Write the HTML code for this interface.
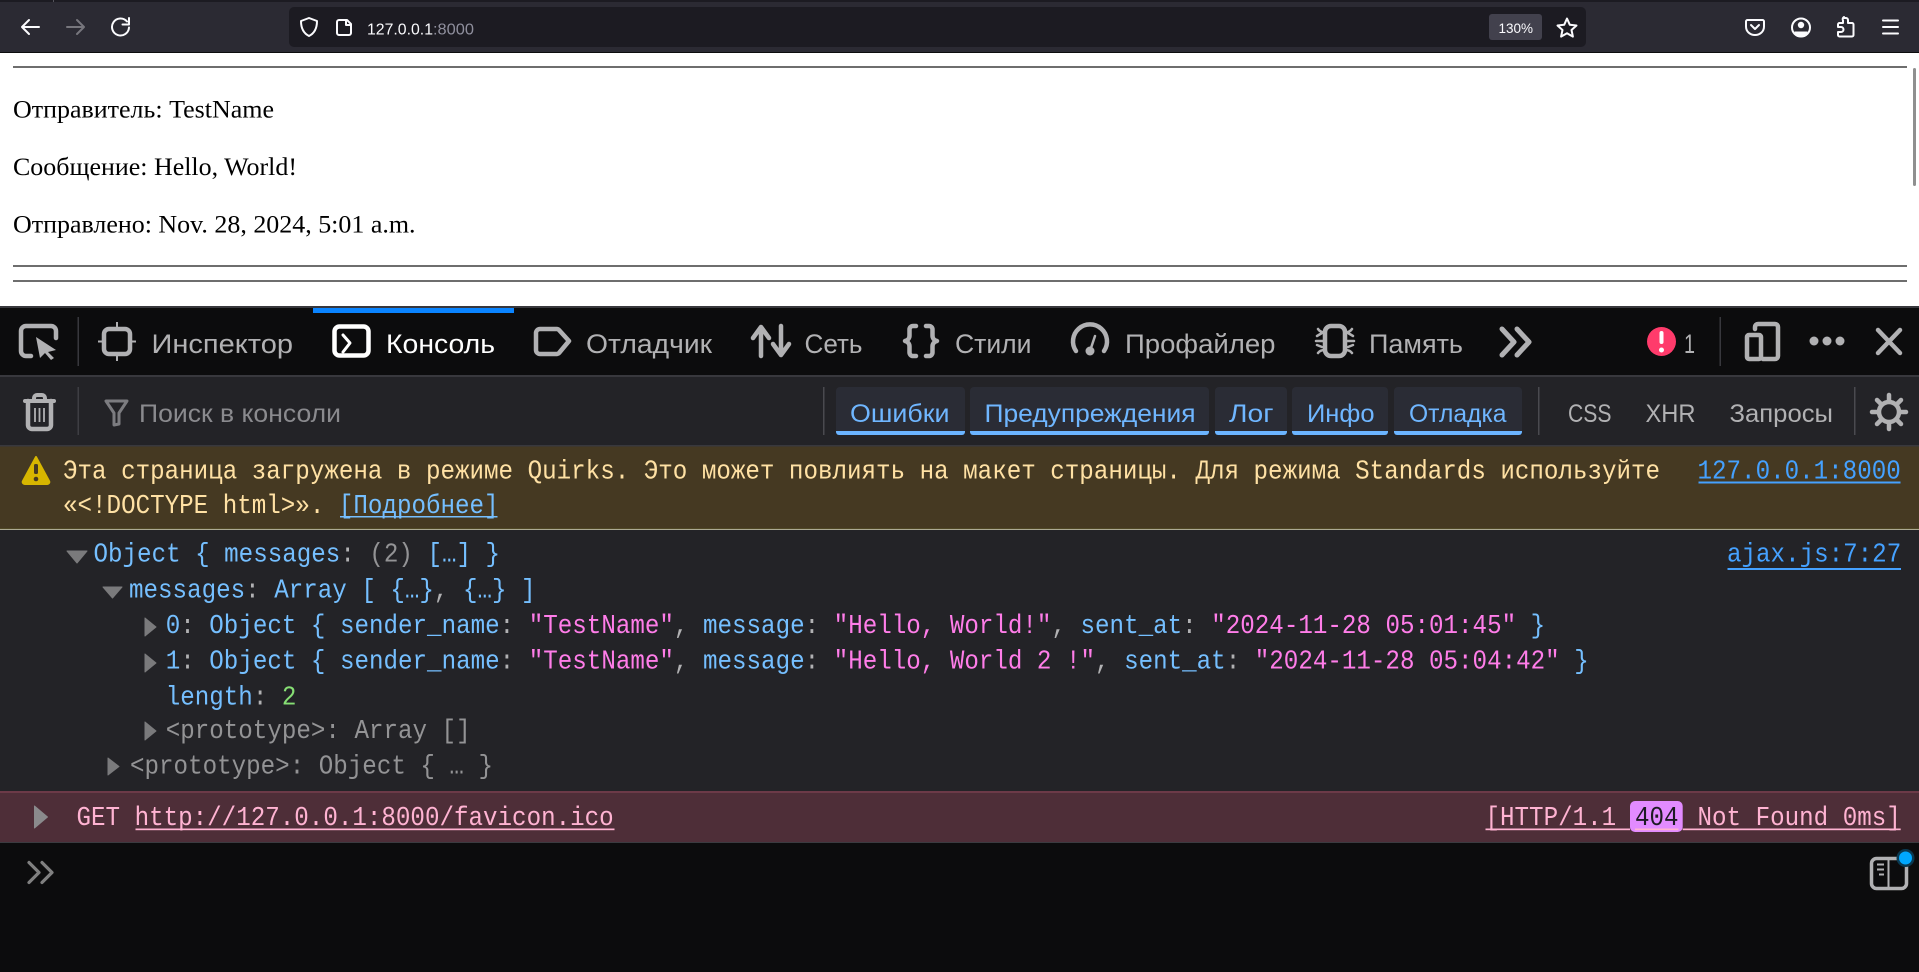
<!DOCTYPE html>
<html><head><meta charset="utf-8"><title>127.0.0.1:8000</title>
<style>
html,body{margin:0;padding:0;background:#fff;overflow:hidden;width:1919px;height:972px}
svg{display:block;position:absolute;left:0;top:0}
text{white-space:pre}
.s{font-family:"Liberation Sans",sans-serif}
.t{font-family:"Liberation Sans",sans-serif;font-size:27px;fill:#b1b1b3}
.f{font-family:"Liberation Sans",sans-serif;font-size:25px;fill:#6fb6ff}
.g{font-family:"Liberation Sans",sans-serif;font-size:25px;fill:#b1b1b3}
.p{font-family:"Liberation Serif",serif;font-size:25px;fill:#000}
.m{font-family:"Liberation Mono",monospace;font-size:26.4px;fill:#75bfff}
.d{fill:#b1b1b3}.n{fill:#939395}.r{fill:#ff7de9}.e{fill:#86de74}
.i{fill:none;stroke:#b1b1b3;stroke-width:4.5;stroke-linecap:round;stroke-linejoin:round}
.w{fill:none;stroke:#fbfbfe;stroke-width:2;stroke-linecap:round;stroke-linejoin:round}
</style></head><body>
<svg width="1919" height="972" viewBox="0 0 1919 972" xmlns="http://www.w3.org/2000/svg">
<!-- browser toolbar -->
<rect width="1919" height="53" fill="#2b2a33"/>
<rect width="1919" height="2" fill="#1c1b22"/>
<rect x="53" width="1" height="2" fill="#55545c"/>
<rect y="52" width="1919" height="1" fill="#0c0c0d"/>
<path class="w" d="M39 27H22M29 20l-7 7 7 7"/>
<path class="w" style="stroke:#77767d" d="M67 27h17M77 20l7 7-7 7"/>
<path class="w" d="M127 21.500a8.500 8.500 0 1 0 2 6M129 18v6.500h-6.500"/>
<rect x="289" y="7" width="1297" height="40" rx="5" fill="#1c1b22"/>
<path class="w" d="M309 18l8 3c0 7-2 12-8 15-6-3-8-8-8-15z"/>
<path class="w" d="M339 20h8l4 4v9a2 2 0 0 1-2 2h-10a2 2 0 0 1-2-2V22a2 2 0 0 1 2-2zM346 20v5h5"/>
<text class="s" x="367" y="34.500" font-size="16" fill="#fbfbfe" textLength="66" lengthAdjust="spacingAndGlyphs">127.0.0.1</text>
<text class="s" x="433" y="34.500" font-size="16" fill="#8f8f9d" textLength="41" lengthAdjust="spacingAndGlyphs">:8000</text>
<rect x="1489" y="14" width="53" height="26" rx="3" fill="#42414d"/>
<text class="s" x="1498.500" y="33" font-size="14" fill="#fbfbfe" textLength="34.500" lengthAdjust="spacingAndGlyphs">130%</text>
<path class="w" d="M1567 18.500l2.800 6.300 6.700.7-5 4.500 1.400 6.600-5.900-3.400-5.900 3.400 1.400-6.600-5-4.500 6.700-.7z"/>
<path class="w" d="M1747.500 20h15a1.500 1.500 0 0 1 1.500 1.500v5c0 5-4 8.500-9 8.500s-9-3.500-9-8.500v-5a1.500 1.500 0 0 1 1.500-1.500z"/>
<path class="w" d="M1751 25l4 4 4-4"/>
<circle class="w" cx="1801" cy="27.500" r="9"/>
<circle cx="1801" cy="25" r="3.200" fill="#fbfbfe"/><path d="M1794.500 31.500h13a6.500 4.500 0 0 1-13 0z" fill="#fbfbfe"/>
<path class="w" d="M1843 18h3a2 2 0 0 1 2 2v3h4a1.500 1.500 0 0 1 1.500 1.500V35a1.500 1.500 0 0 1-1.500 1.500h-12.500a1.500 1.500 0 0 1-1.500-1.500v-3h3a2.500 2.500 0 0 0 0-5h-3v-2.500a1.500 1.500 0 0 1 1.500-1.500h3.500v-2.500a2.500 2.500 0 0 1 1-3.500z"/>
<path class="w" d="M1883 20.500h15M1883 27h15M1883 33.500h15"/>

<!-- page -->
<rect y="53" width="1919" height="253" fill="#fff"/>
<rect x="13" y="66" width="1894" height="2" fill="#6e6e6e"/>
<text class="p" x="13" y="117.500" textLength="261" lengthAdjust="spacingAndGlyphs">Отправитель: TestName</text>
<text class="p" x="13" y="175" textLength="284" lengthAdjust="spacingAndGlyphs">Сообщение: Hello, World!</text>
<text class="p" x="13" y="232.500" textLength="402.500" lengthAdjust="spacingAndGlyphs">Отправлено: Nov. 28, 2024, 5:01 a.m.</text>
<rect x="13" y="265" width="1894" height="2" fill="#6e6e6e"/>
<rect x="13" y="280" width="1894" height="2" fill="#6e6e6e"/>
<rect x="1913" y="68" width="3" height="118" rx="1.500" fill="#8f8f8f"/>

<!-- devtools tab bar -->
<rect y="306" width="1919" height="2" fill="#38383d"/>
<rect y="308" width="1919" height="67" fill="#0c0c0d"/>
<rect x="313" y="308" width="201" height="5" fill="#0a84ff"/>
<rect y="375" width="1919" height="2" fill="#38383d"/>
<path class="i" d="M31 356h-5a5 5 0 0 1-5-5V331a5 5 0 0 1 5-5h25a5 5 0 0 1 5 5v7"/>
<path d="M36 337l20 13-8 2 6 6-3 2-6-7-5 5z" fill="#b1b1b3"/>
<rect x="77.500" y="317" width="1.500" height="49" fill="#38383d"/>
<rect class="i" x="104" y="329" width="26" height="25" rx="5"/>
<path d="M98 341.500h6M130 341.500h6M117 322v7M117 354v7" fill="none" stroke="#b1b1b3" stroke-width="2"/>
<text class="t" x="151.500" y="353" textLength="141.500" lengthAdjust="spacingAndGlyphs">Инспектор</text>
<rect x="334.500" y="326.500" width="34" height="29" rx="5" fill="none" stroke="#fff" stroke-width="4.500"/>
<path d="M343 335l7 8-7 9" fill="none" stroke="#fff" stroke-width="3" stroke-linecap="round" stroke-linejoin="round"/>
<text class="t" style="fill:#fff" x="386" y="353" textLength="109" lengthAdjust="spacingAndGlyphs">Консоль</text>
<path class="i" d="M540 329h17a3 3 0 0 1 2 1l10 11-10 12a3 3 0 0 1-2 1h-17a4 4 0 0 1-4-4v-17a4 4 0 0 1 4-4z"/>
<text class="t" x="586" y="353" textLength="126" lengthAdjust="spacingAndGlyphs">Отладчик</text>
<path class="i" d="M761 356V328M753 338l8-11 8 11M781 326v28M773 344l8 11 8-11"/>
<text class="t" x="804.500" y="353" textLength="58" lengthAdjust="spacingAndGlyphs">Сеть</text>
<path class="i" d="M916 326h-3a3.500 3.500 0 0 0-3.500 3.500v6a5.500 5.500 0 0 1-4.500 5.500 5.500 5.500 0 0 1 4.500 5.500v6a3.500 3.500 0 0 0 3.500 3.500h3M926 326h3a3.500 3.500 0 0 1 3.500 3.500v6a5.500 5.500 0 0 0 4.500 5.500 5.500 5.500 0 0 0-4.500 5.500v6a3.500 3.500 0 0 1-3.500 3.500h-3"/>
<text class="t" x="955" y="353" textLength="76.500" lengthAdjust="spacingAndGlyphs">Стили</text>
<path class="i" d="M1076 351a17 17 0 1 1 28 0"/>
<circle cx="1090" cy="351" r="4.500" fill="#b1b1b3"/><path class="i" style="stroke-width:2.500" d="M1090 351l5-15"/>
<text class="t" x="1125" y="353" textLength="150.500" lengthAdjust="spacingAndGlyphs">Профайлер</text>
<rect class="i" x="1325" y="326" width="20" height="30" rx="6"/>
<path class="i" style="stroke-width:2.500" d="M1325 333q-5-1-7-4M1322 333l-5 3M1325 341h-9M1325 350q-5 0-7 3M1322 347l-5-2M1345 333q5-1 7-4M1348 333l5 3M1345 341h9M1345 350q5 0 7 3M1348 347l5-2"/>
<text class="t" x="1369" y="353" textLength="94" lengthAdjust="spacingAndGlyphs">Память</text>
<path class="i" style="stroke-width:5" d="M1502 329l12 13-12 13M1517 329l12 13-12 13"/>
<circle cx="1661.500" cy="341.500" r="14.500" fill="#ff3b6b"/>
<rect x="1659.500" y="331" width="4" height="13" rx="2" fill="#fff"/><circle cx="1661.500" cy="350" r="2.500" fill="#fff"/>
<text class="t" x="1684" y="353" textLength="11" lengthAdjust="spacingAndGlyphs">1</text>
<rect x="1719.500" y="317" width="1.500" height="49" fill="#38383d"/>
<path class="i" d="M1755 329v-2a3 3 0 0 1 3-3h17a3 3 0 0 1 3 3v29a3 3 0 0 1-3 3h-12"/>
<rect class="i" x="1747" y="335" width="14" height="24" rx="2"/>
<circle cx="1814" cy="341" r="4.500" fill="#b1b1b3"/><circle cx="1827" cy="341" r="4.500" fill="#b1b1b3"/><circle cx="1840" cy="341" r="4.500" fill="#b1b1b3"/>
<path class="i" d="M1878 330l22 23M1900 330l-22 23"/>

<!-- filter bar -->
<rect y="377" width="1919" height="68" fill="#232327"/>
<path class="i" style="stroke-width:4" d="M25 401h29M34 400v-2a3 3 0 0 1 3-3h5a3 3 0 0 1 3 3v2"/>
<path class="i" d="M28 401v24a4 4 0 0 0 4 4h15a4 4 0 0 0 4-4v-24"/>
<path d="M35 408v14M39.500 408v14M44 408v14" fill="none" stroke="#b1b1b3" stroke-width="1.800"/>
<rect x="77.500" y="387" width="1.500" height="48" fill="#3e3e43"/>
<path d="M106 401h21l-8 12v11l-5 1v-12z" fill="none" stroke="#7c7c80" stroke-width="3" stroke-linejoin="round"/>
<text class="g" style="fill:#8a8a8e" x="139" y="422" textLength="202" lengthAdjust="spacingAndGlyphs">Поиск в консоли</text>
<rect x="823" y="387" width="1.500" height="48" fill="#4a4a4f"/>
<g fill="#2a2c35">
<rect x="836" y="387" width="129" height="48" rx="4"/><rect x="970" y="387" width="239" height="48" rx="4"/><rect x="1215" y="387" width="72" height="48" rx="4"/><rect x="1292" y="387" width="96" height="48" rx="4"/><rect x="1394" y="387" width="128" height="48" rx="4"/>
</g>
<g fill="#6bb4ff">
<path d="M836 431h129v1a3 3 0 0 1-3 3H839a3 3 0 0 1-3-3z"/><path d="M970 431h239v1a3 3 0 0 1-3 3H973a3 3 0 0 1-3-3z"/><path d="M1215 431h72v1a3 3 0 0 1-3 3h-66a3 3 0 0 1-3-3z"/><path d="M1292 431h96v1a3 3 0 0 1-3 3h-90a3 3 0 0 1-3-3z"/><path d="M1394 431h128v1a3 3 0 0 1-3 3h-122a3 3 0 0 1-3-3z"/>
</g>
<text class="f" x="850" y="422" textLength="99.500" lengthAdjust="spacingAndGlyphs">Ошибки</text>
<text class="f" x="984.500" y="422" textLength="211" lengthAdjust="spacingAndGlyphs">Предупреждения</text>
<text class="f" x="1229" y="422" textLength="44.500" lengthAdjust="spacingAndGlyphs">Лог</text>
<text class="f" x="1307" y="422" textLength="67.500" lengthAdjust="spacingAndGlyphs">Инфо</text>
<text class="f" x="1409" y="422" textLength="97.500" lengthAdjust="spacingAndGlyphs">Отладка</text>
<rect x="1538" y="387" width="1.500" height="48" fill="#4a4a4f"/>
<text class="g" x="1568" y="422" textLength="43.500" lengthAdjust="spacingAndGlyphs">CSS</text>
<text class="g" x="1645.500" y="422" textLength="50" lengthAdjust="spacingAndGlyphs">XHR</text>
<text class="g" x="1729.500" y="422" textLength="103.500" lengthAdjust="spacingAndGlyphs">Запросы</text>
<rect x="1854" y="387" width="1.500" height="48" fill="#4a4a4f"/>
<circle class="i" cx="1889" cy="412" r="10"/>
<path class="i" d="M1889 395v6M1889 423v6M1872 412h6M1900 412h6M1877 400l4 4M1897 420l4 4M1877 424l4-4M1897 404l4-4"/>

<!-- warning -->
<rect y="445" width="1919" height="84" fill="#453922"/>
<rect y="445" width="1919" height="1.500" fill="#38383d"/>
<rect y="528.500" width="1919" height="1" fill="#5a5629"/>
<path d="M36 457l13 24a2 2 0 0 1-2 3H25a2 2 0 0 1-2-3z" fill="#d7b600" stroke="#d7b600" stroke-width="2" stroke-linejoin="round"/>
<rect x="34" y="464" width="4" height="10" rx="1.500" fill="#453922"/><circle cx="36" cy="479" r="2.300" fill="#453922"/>
<text class="m" style="fill:#ffe1a4" transform="translate(63 478.700) scale(.917 1)">Эта страница загружена в режиме Quirks. Это может повлиять на макет страницы. Для режима Standards используйте</text>
<text class="m" style="fill:#ffe1a4" transform="translate(63 513) scale(.917 1)">«&lt;!DOCTYPE html&gt;». <tspan style="fill:#75bfff">[Подробнее]</tspan></text>
<rect x="340" y="516" width="157.500" height="1.500" fill="#75bfff"/>
<text class="m" style="fill:#45a1ff" transform="translate(1697.500 478.700) scale(.917 1)">127.0.0.1:8000</text>
<rect x="1698.500" y="481.500" width="202" height="2" fill="#45a1ff"/>

<!-- console output -->
<rect y="530" width="1919" height="261" fill="#232327"/>
<path d="M67 551h20l-10 12z" fill="#7a7a7c" stroke="#7a7a7c" stroke-linejoin="round"/>
<text class="m" transform="translate(93.500 561.500) scale(.917 1)">Object { messages<tspan class="d">:</tspan> <tspan class="n">(2)</tspan> […] }</text>
<text class="m" style="fill:#45a1ff" transform="translate(1727 561.500) scale(.917 1)">ajax.js:7:27</text>
<rect x="1727.500" y="568" width="173.500" height="2" fill="#45a1ff"/>
<path d="M103 587h19l-9.500 11z" fill="#7a7a7c" stroke="#7a7a7c" stroke-linejoin="round"/>
<text class="m" transform="translate(129 597.700) scale(.917 1)">messages<tspan class="d">:</tspan> Array [ {…}<tspan class="d">,</tspan> {…} ]</text>
<path d="M145 618v18l11-9z" fill="#7a7a7c" stroke="#7a7a7c" stroke-linejoin="round"/>
<text class="m" transform="translate(165.700 633) scale(.917 1)">0<tspan class="d">:</tspan> Object { sender_name<tspan class="d">:</tspan> <tspan class="r">"TestName"</tspan><tspan class="d">,</tspan> message<tspan class="d">:</tspan> <tspan class="r">"Hello, World!"</tspan><tspan class="d">,</tspan> sent_at<tspan class="d">:</tspan> <tspan class="r">"2024-11-28 05:01:45"</tspan> }</text>
<path d="M145 654v18l11-9z" fill="#7a7a7c" stroke="#7a7a7c" stroke-linejoin="round"/>
<text class="m" transform="translate(165.700 668.700) scale(.917 1)">1<tspan class="d">:</tspan> Object { sender_name<tspan class="d">:</tspan> <tspan class="r">"TestName"</tspan><tspan class="d">,</tspan> message<tspan class="d">:</tspan> <tspan class="r">"Hello, World 2 !"</tspan><tspan class="d">,</tspan> sent_at<tspan class="d">:</tspan> <tspan class="r">"2024-11-28 05:04:42"</tspan> }</text>
<text class="m" transform="translate(165.700 704.700) scale(.917 1)">length<tspan class="d">:</tspan> <tspan class="e">2</tspan></text>
<path d="M145 722v18l11-9z" fill="#7a7a7c" stroke="#7a7a7c" stroke-linejoin="round"/>
<text class="m n" transform="translate(165.700 738) scale(.917 1)" style="fill:#939395">&lt;prototype&gt;: Array []</text>
<path d="M108 758v17l11-8.500z" fill="#7a7a7c" stroke="#7a7a7c" stroke-linejoin="round"/>
<text class="m" transform="translate(130 773.500) scale(.917 1)" style="fill:#939395">&lt;prototype&gt;: Object { … }</text>

<!-- error row -->
<rect y="791" width="1919" height="52" fill="#4e2e38"/>
<rect y="791" width="1919" height="2" fill="#6c3a48"/>
<rect y="842" width="1919" height="1" fill="#3b3b40"/>
<path d="M34.500 806v22l13-11z" fill="#8a8a8c" stroke="#8a8a8c" stroke-linejoin="round"/>
<text class="m" style="fill:#ffb3d2" transform="translate(76.500 825) scale(.917 1)">GET http://127.0.0.1:8000/favicon.ico</text>
<rect x="135.500" y="828.500" width="479" height="1.700" fill="#ffb3d2"/>
<rect x="1630" y="801" width="52.700" height="31" rx="5" fill="#e28bff"/>
<text class="m" style="fill:#ffb3d2" transform="translate(1485.500 825) scale(.917 1)">[HTTP/1.1 </text>
<text class="m" style="fill:#1c1b22" transform="translate(1635 825) scale(.917 1)">404</text>
<text class="m" style="fill:#ffb3d2" transform="translate(1683 825) scale(.917 1)"> Not Found 0ms]</text>
<rect x="1485.500" y="828.500" width="144.500" height="1.700" fill="#ffb3d2"/>
<rect x="1635" y="828.500" width="43.500" height="1.700" fill="#ffb3d2"/>
<rect x="1682.700" y="828.500" width="218" height="1.700" fill="#ffb3d2"/>

<!-- input -->
<rect y="843" width="1919" height="129" fill="#0c0c0d"/>
<path d="M29 862.500l10 10-10 10M42 862.500l10 10-10 10" fill="none" stroke="#808080" stroke-width="3.200" stroke-linecap="round" stroke-linejoin="round"/>
<rect x="1871.500" y="858.500" width="35" height="30" rx="5" fill="none" stroke="#b1b1b3" stroke-width="3.500"/>
<path d="M1888.500 858v30" stroke="#b1b1b3" stroke-width="2"/>
<path d="M1877 864.500h7M1877 869.500h7M1879 874.500h5" stroke="#b1b1b3" stroke-width="2"/>
<circle cx="1905.500" cy="858" r="9" fill="#0a3a52"/>
<circle cx="1905.500" cy="858" r="6.500" fill="#00a8ff"/>
</svg>
</body></html>
